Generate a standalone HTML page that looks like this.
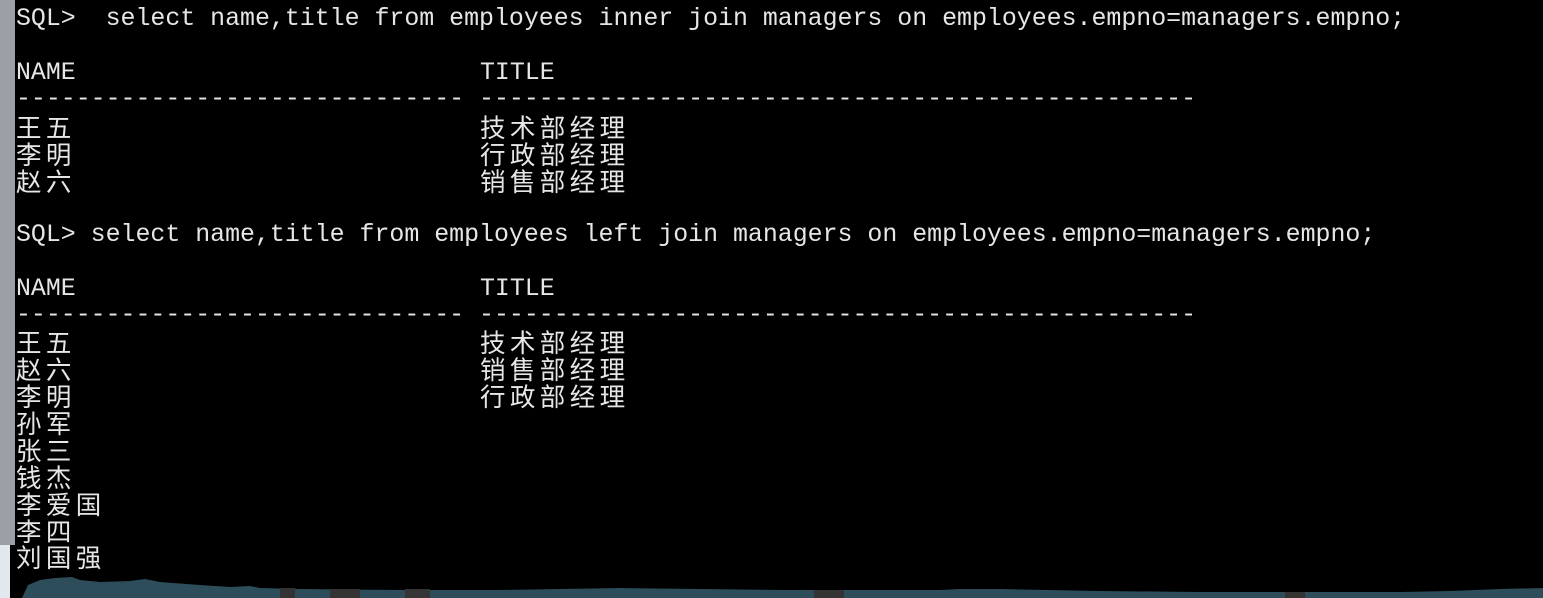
<!DOCTYPE html>
<html><head><meta charset="utf-8"><style>
html,body{margin:0;padding:0;background:#000;width:1543px;height:598px;overflow:hidden;position:relative}
.l{position:absolute;left:16px;white-space:pre;color:#e6e6e6;font-family:"Liberation Mono","Noto Sans CJK SC",monospace;font-size:24.9px;line-height:27px;height:27px}
.c{font-family:"Noto Sans CJK SC","WenQuanYi Zen Hei",sans-serif;font-size:25.5px;letter-spacing:4.4px}
.t{position:absolute;left:464px}
</style></head><body>
<div style="position:absolute;left:0;top:0;width:15px;height:545px;background:#9aa0a5"></div>
<div style="position:absolute;left:0;top:545px;width:10px;height:53px;background:#e2e8ee"></div>
<div class="l" style="top:6px">SQL&gt;  select name,title from employees inner join managers on employees.empno=managers.empno;</div>
<div class="l" style="top:60px">NAME<span class="t">TITLE</span></div>
<div class="l" style="top:86px">------------------------------ ------------------------------------------------</div>
<div class="l" style="top:113px"><span class="c">王五</span><span class="t c">技术部经理</span></div>
<div class="l" style="top:140px"><span class="c">李明</span><span class="t c">行政部经理</span></div>
<div class="l" style="top:167px"><span class="c">赵六</span><span class="t c">销售部经理</span></div>
<div class="l" style="top:222px">SQL&gt; select name,title from employees left join managers on employees.empno=managers.empno;</div>
<div class="l" style="top:276px">NAME<span class="t">TITLE</span></div>
<div class="l" style="top:302px">------------------------------ ------------------------------------------------</div>
<div class="l" style="top:328px"><span class="c">王五</span><span class="t c">技术部经理</span></div>
<div class="l" style="top:355px"><span class="c">赵六</span><span class="t c">销售部经理</span></div>
<div class="l" style="top:382px"><span class="c">李明</span><span class="t c">行政部经理</span></div>
<div class="l" style="top:409px"><span class="c">孙军</span></div>
<div class="l" style="top:436px"><span class="c">张三</span></div>
<div class="l" style="top:463px"><span class="c">钱杰</span></div>
<div class="l" style="top:490px"><span class="c">李爱国</span></div>
<div class="l" style="top:517px"><span class="c">李四</span></div>
<div class="l" style="top:543px"><span class="c">刘国强</span></div>
<svg style="position:absolute;left:0;top:0" width="1543" height="598">
<path d="M22 598 L28 585 L40 580 L55 578 L72 577 L80 580 L100 582 L130 581 L145 579 L160 582 L200 585 L230 587 L250 586 L260 588 L300 589 L400 590 L500 590 L560 589 L620 588 L700 589 L780 590 L860 590 L940 590 L960 589 L1000 589 L1100 591 L1200 592 L1300 592 L1400 592 L1450 591 L1500 589 L1543 588 L1543 598 Z" fill="#2c4d59"/>
<rect x="280" y="588" width="15" height="10" fill="#333"/>
<rect x="330" y="589" width="30" height="9" fill="#333"/>
<rect x="405" y="589" width="25" height="9" fill="#353535"/>
<rect x="814" y="590" width="30" height="8" fill="#333"/>
<rect x="1285" y="592" width="20" height="6" fill="#333"/>
</svg>
</body></html>
